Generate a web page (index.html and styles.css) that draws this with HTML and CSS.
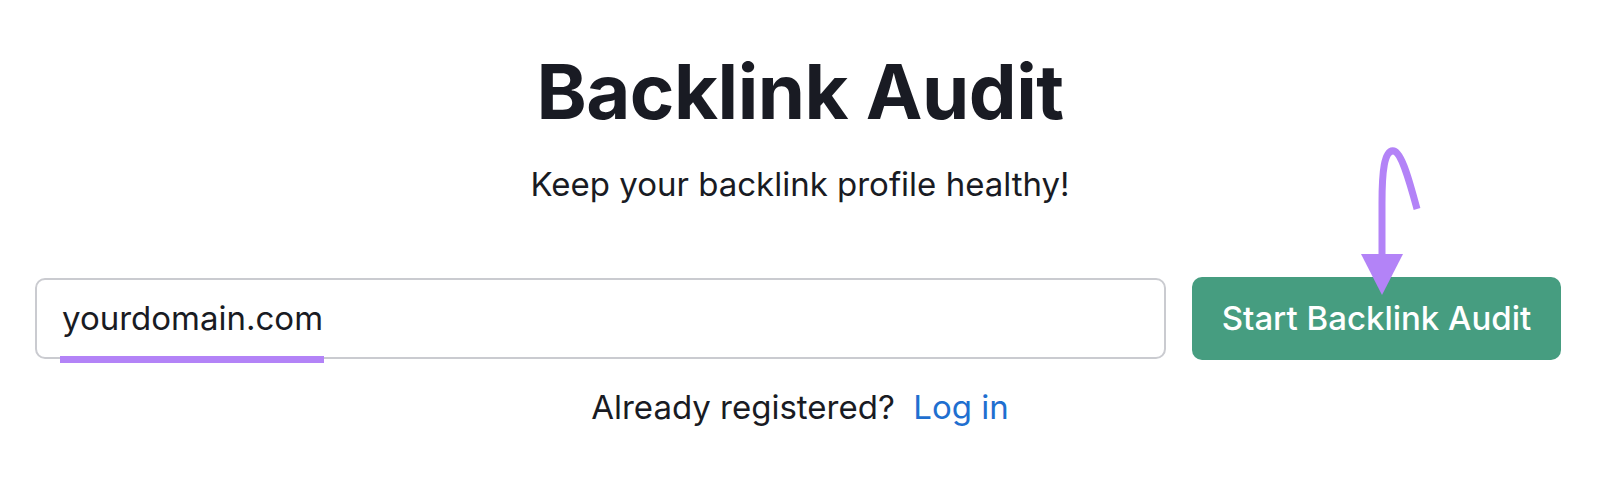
FILE: index.html
```html
<!DOCTYPE html>
<html lang="en">
<head>
<meta charset="utf-8">
<title>Backlink Audit</title>
<link rel="stylesheet" href="styles.css">
</head>
<body>
<main class="page">
  <h1 class="title">Backlink Audit</h1>
  <p class="subtitle">Keep your backlink profile healthy!</p>
  <form class="search">
    <div class="field">
      <span class="field-text">yourdomain.com</span>
      <span class="field-mark"></span>
    </div>
    <div class="action">
      <button type="button" class="btn">Start Backlink Audit</button>
      <svg class="arrow" width="70" height="160" viewBox="0 0 70 160">
        <path d="M65 66 C 58 40, 50 10, 42 8 C 32 6, 30 30, 30 60 L 30 114" fill="none" stroke="#b383f7" stroke-width="7"/>
        <polygon points="9,111 51,111 30,152" fill="#b383f7"/>
      </svg>
    </div>
  </form>
  <p class="login">Already registered?&nbsp; <a href="#" class="login-link">Log in</a></p>
</main>
</body>
</html>
```
FILE: styles.css
```css
* { box-sizing: border-box; }
html, body { margin: 0; padding: 0; background: #fff; }
body {
  font-family: Inter, "Noto Sans", sans-serif;
  color: #191b23;
}
.page {
  display: flex;
  flex-direction: column;
  align-items: center;
  padding-top: 46px;
}
.title {
  margin: 0;
  font-size: 76px;
  font-weight: 700;
  line-height: 1.21;
  letter-spacing: -0.5px;
}
.subtitle {
  margin: 27px 0 0;
  font-size: 33px;
  font-weight: 400;
  line-height: 1.21;
}
.search {
  margin-top: 73px;
  display: flex;
  gap: 26px;
  width: 1526px;
  align-self: flex-start;
  margin-left: 35px;
}
.field {
  position: relative;
  flex: 1;
  height: 81px;
  border: 2px solid #cacbd0;
  border-radius: 10px;
  display: flex;
  align-items: center;
  padding-left: 25px;
}
.field-text {
  font-size: 33px;
  line-height: 1.21;
  color: #191b23;
  padding-top: 2px;
}
.field-mark {
  position: absolute;
  left: 23px;
  bottom: -6px;
  width: 264px;
  height: 7px;
  background: #b383f7;
}
.action {
  position: relative;
  width: 369px;
}
.btn {
  width: 100%;
  height: 83px;
  margin-top: -1px;
  border: 0;
  border-radius: 10px;
  background: #469d80;
  color: #fff;
  font-family: Inter, "Noto Sans", sans-serif;
  font-size: 33px;
  font-weight: 500;
}
.arrow {
  position: absolute;
  left: 160px;
  top: -135px;
}
.login {
  margin: 28px 0 0;
  font-size: 33px;
  line-height: 1.21;
}
.login-link {
  color: #1f6fd0;
  text-decoration: none;
}
```
